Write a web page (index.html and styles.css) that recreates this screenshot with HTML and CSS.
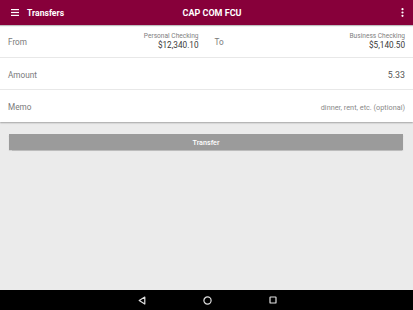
FILE: index.html
```html
<!DOCTYPE html>
<html>
<head>
<meta charset="utf-8">
<link rel="stylesheet" href="styles.css">
</head>
<body>
<div class="screen">
  <header class="appbar">
    <div class="appbar-left">
      <svg class="menu-icon" width="8" height="7" viewBox="0 0 8 7"><rect x="0" y="0" width="8" height="1.2" fill="#fff"/><rect x="0" y="2.9" width="8" height="1.2" fill="#fff"/><rect x="0" y="5.8" width="8" height="1.2" fill="#fff"/></svg>
      <span class="appbar-title">Transfers</span>
    </div>
    <div class="appbar-center">CAP COM FCU</div>
    <div class="appbar-right">
      <svg width="3" height="9" viewBox="0 0 3 9"><circle cx="1.5" cy="1.2" r="1.1" fill="#fff"/><circle cx="1.5" cy="4.5" r="1.1" fill="#fff"/><circle cx="1.5" cy="7.8" r="1.1" fill="#fff"/></svg>
    </div>
  </header>

  <section class="card">
    <div class="row row-split">
      <div class="half">
        <span class="label">From</span>
        <div class="account">
          <span class="account-name">Personal Checking</span>
          <span class="account-balance">$12,340.10</span>
        </div>
      </div>
      <div class="half">
        <span class="label">To</span>
        <div class="account">
          <span class="account-name">Business Checking</span>
          <span class="account-balance">$5,140.50</span>
        </div>
      </div>
    </div>
    <div class="row">
      <span class="label">Amount</span>
      <span class="value">5.33</span>
    </div>
    <div class="row row-last">
      <span class="label">Memo</span>
      <span class="placeholder">dinner, rent, etc. (optional)</span>
    </div>
  </section>

  <div class="actions">
    <button class="transfer-btn">Transfer</button>
  </div>

  <div class="spacer"></div>

  <nav class="navbar">
    <svg width="8" height="9" viewBox="0 0 8 9"><path d="M6.8 1 L1.2 4.5 L6.8 8 Z" fill="none" stroke="#e0e0e0" stroke-width="1.2" stroke-linejoin="round"/></svg>
    <svg width="9" height="9" viewBox="0 0 9 9"><circle cx="4.5" cy="4.5" r="3.6" fill="none" stroke="#e0e0e0" stroke-width="1.2"/></svg>
    <svg width="8" height="8" viewBox="0 0 8 8"><rect x="1" y="1" width="6" height="6" rx="0.6" fill="none" stroke="#e0e0e0" stroke-width="1.2"/></svg>
  </nav>
</div>
</body>
</html>
```

FILE: styles.css
```css
* { box-sizing: border-box; }
html, body { margin: 0; padding: 0; }
body {
  font-family: Roboto, "Liberation Sans", sans-serif;
  background: #ebebeb;
}
.screen {
  width: 413px;
  height: 310px;
  display: flex;
  flex-direction: column;
  background: #ebebeb;
}
.appbar {
  height: 25px;
  background: #87003a;
  color: #fff;
  display: grid;
  grid-template-columns: 1fr auto 1fr;
  align-items: center;
  padding: 0 8px 0 11px;
  box-shadow: 0 1px 1px rgba(0,0,0,0.25);
  position: relative;
  z-index: 2;
}
.appbar-left { display: flex; align-items: center; gap: 8px; }
.menu-icon { display: block; }
.appbar-title { font-size: 8.6px; font-weight: 700; }
.appbar-center { font-size: 9px; font-weight: 700; padding-left: 8px; }
.appbar-right { display: flex; justify-content: flex-end; padding-right: 1px; }
.appbar-right svg { display: block; }

.card {
  background: #fff;
  box-shadow: 0 1px 1.5px rgba(0,0,0,0.3);
}
.row {
  height: 32px;
  display: flex;
  align-items: center;
  justify-content: space-between;
  padding: 2px 8px 0;
  border-bottom: 1px solid #e8e8e8;
}
.row-split { height: 33px; padding: 1px 0 0; }
.row-last { border-bottom: none; }
.half {
  flex: 1;
  display: flex;
  align-items: center;
  justify-content: space-between;
  padding: 0 8px;
  height: 100%;
}
.label { font-size: 8.2px; color: #7a7a7a; }
.account { display: flex; flex-direction: column; align-items: flex-end; }
.account-name { font-size: 6.6px; color: #808080; line-height: 8px; }
.account-balance { font-size: 8.2px; color: #3a3a3a; line-height: 11px; }
.value { font-size: 8.8px; color: #555; }
.placeholder { font-size: 7.3px; color: #8a8a8a; }

.actions { padding: 12px 10px 0 9px; }
.transfer-btn {
  width: 100%;
  height: 16px;
  border: none;
  background: #9b9b9b;
  color: #fff;
  font-family: Roboto, "Liberation Sans", sans-serif;
  font-size: 7.2px;
  font-weight: 500;
  padding: 0;
  display: block;
  box-shadow: 0 0.5px 1px rgba(0,0,0,0.2);
}
.spacer { flex: 1; }
.navbar {
  height: 20px;
  background: #000;
  display: flex;
  align-items: center;
  justify-content: center;
  gap: 57px;
  padding-left: 2px;
}
.navbar svg { display: block; }
```
